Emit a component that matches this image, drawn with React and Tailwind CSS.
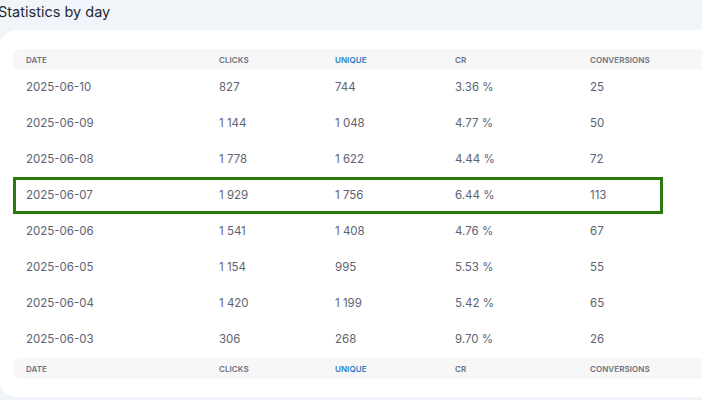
import React from 'react'

const rows = [
  { date: '2025-06-10', clicks: '827', unique: '744', cr: '3.36 %', conv: '25' },
  { date: '2025-06-09', clicks: '1\u00A0144', unique: '1\u00A0048', cr: '4.77 %', conv: '50' },
  { date: '2025-06-08', clicks: '1\u00A0778', unique: '1\u00A0622', cr: '4.44 %', conv: '72' },
  { date: '2025-06-07', clicks: '1\u00A0929', unique: '1\u00A0756', cr: '6.44 %', conv: '113', highlight: true },
  { date: '2025-06-06', clicks: '1\u00A0541', unique: '1\u00A0408', cr: '4.76 %', conv: '67' },
  { date: '2025-06-05', clicks: '1\u00A0154', unique: '995', cr: '5.53 %', conv: '55' },
  { date: '2025-06-04', clicks: '1\u00A0420', unique: '1\u00A0199', cr: '5.42 %', conv: '65' },
  { date: '2025-06-03', clicks: '306', unique: '268', cr: '9.70 %', conv: '26' },
]

const cols = 'grid grid-cols-[193px_116px_120px_135px_1fr] px-[13px] items-center'

function HeaderRow() {
  return (
    <div className={`${cols} h-[21px] bg-[#f7f7f7] rounded-lg text-[8px] font-semibold uppercase tracking-[0.01em] text-[#6b7280]`}>
      <span>Date</span>
      <span>Clicks</span>
      <span className="text-[#2b7bc4]">Unique</span>
      <span>CR</span>
      <span>Conversions</span>
    </div>
  )
}

export default function App() {
  return (
    <div className="w-[702px] h-[400px] overflow-hidden bg-[#f1f5f9]" style={{ fontFamily: 'Inter, "Noto Sans", sans-serif' }}>
      <h2 className="-ml-[2px] pt-[1px] h-[30px] text-[14.5px] leading-[22px] text-[#1f2937]">Statistics by day</h2>

      <div className="w-[740px] h-[367px] bg-white rounded-2xl pt-[19px] pl-[13px]">
        <HeaderRow />
        {rows.map((r) => (
          <div key={r.date} className={`${cols} relative h-[36px] text-[11.5px] text-[#5d6372]`}>
            <span>{r.date}</span>
            <span>{r.clicks}</span>
            <span>{r.unique}</span>
            <span>{r.cr}</span>
            <span>{r.conv}</span>
            {r.highlight && (
              <span className="absolute left-0 -top-[1px] w-[650px] h-[37px] border-[3px] border-[#2a7a10]" />
            )}
          </div>
        ))}
        <HeaderRow />
      </div>
    </div>
  )
}
